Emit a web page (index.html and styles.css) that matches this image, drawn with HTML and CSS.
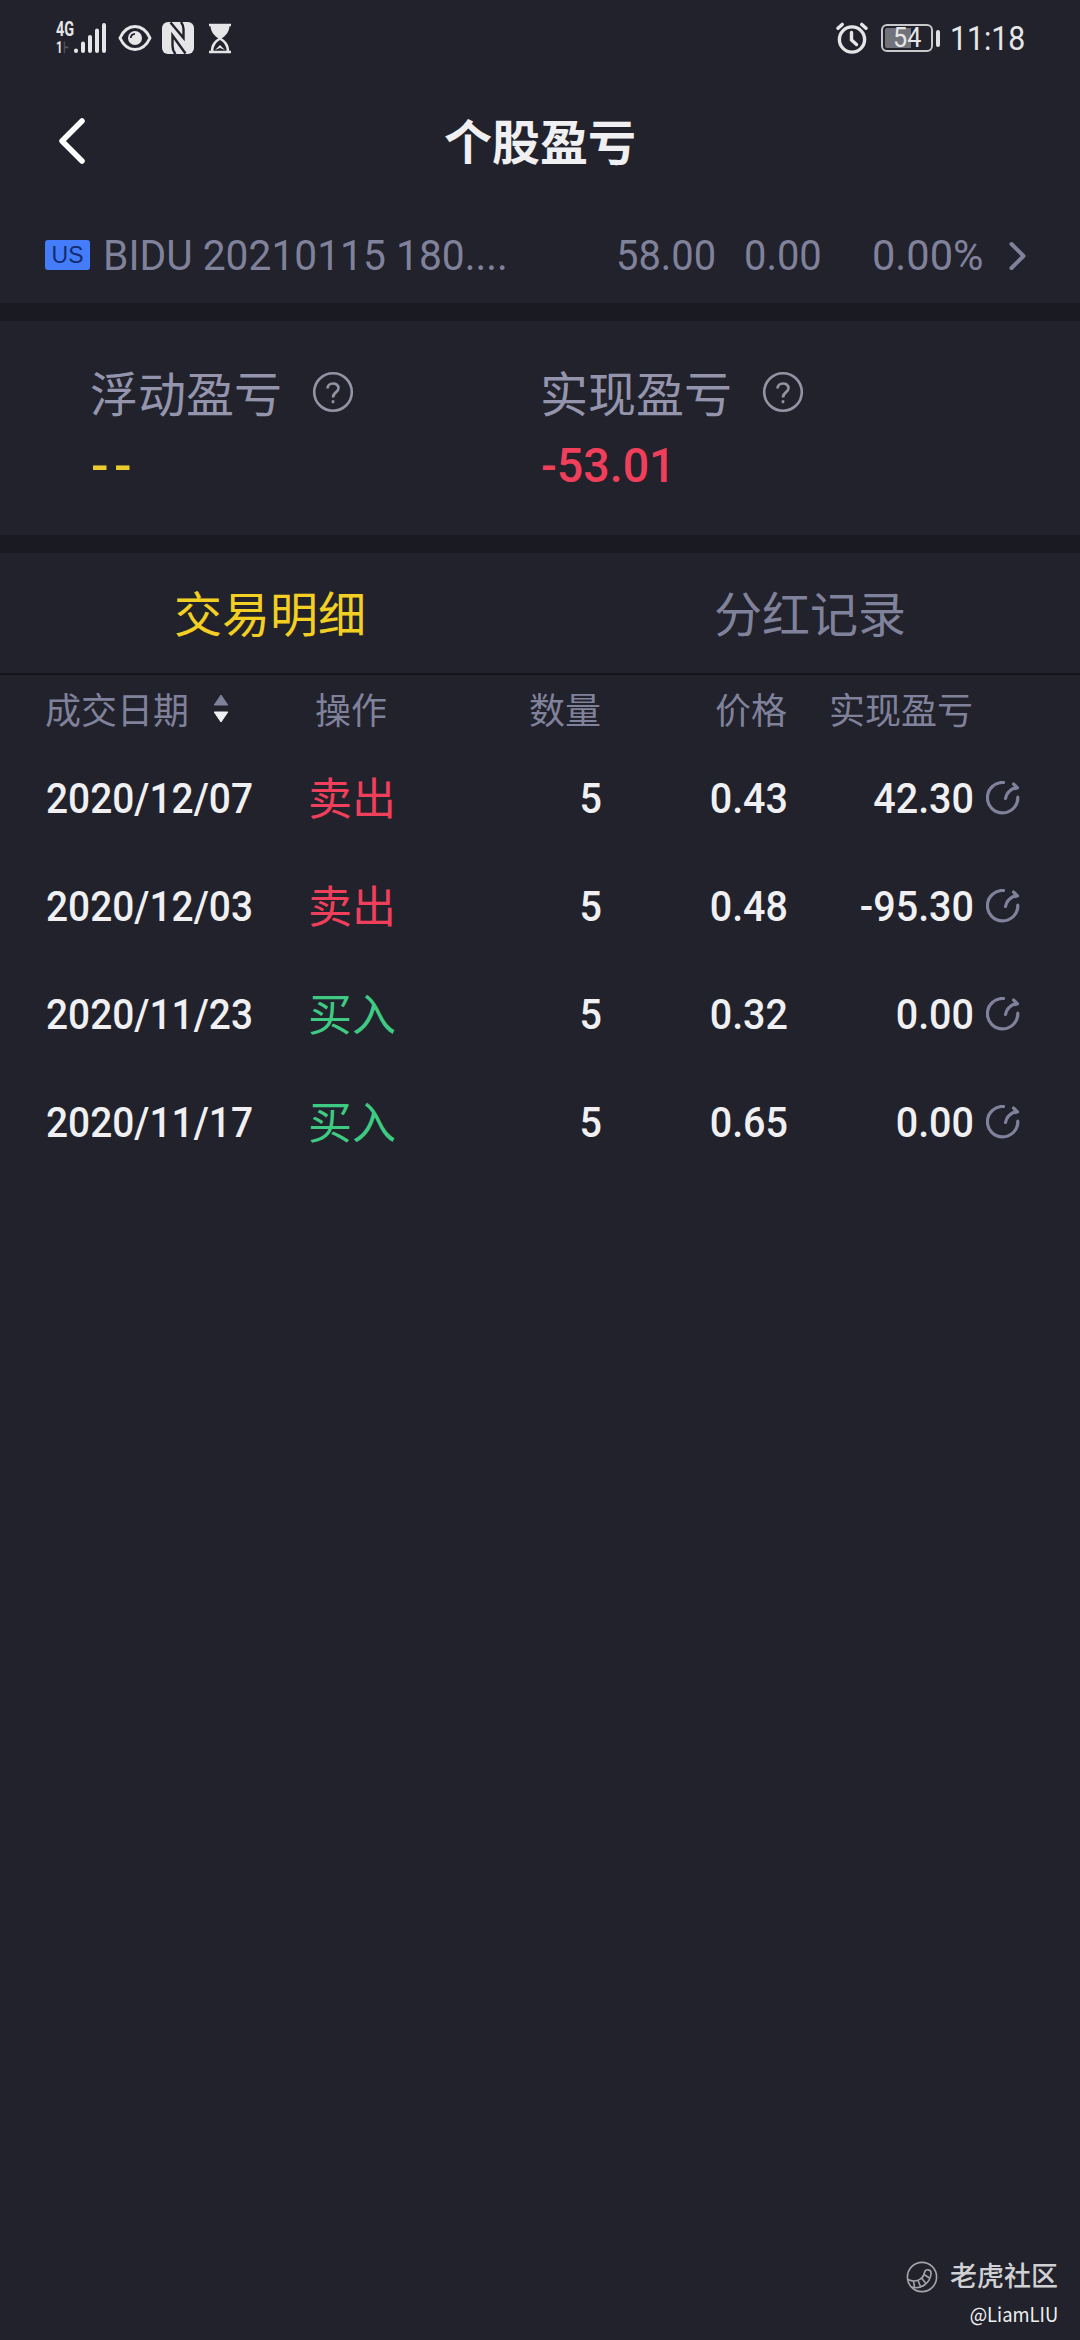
FILE: index.html
```html
<!DOCTYPE html>
<html lang="zh-CN">
<head>
    <meta charset="UTF-8">
    <meta name="viewport" content="width=device-width, initial-scale=1.0">
    <title>个股盈亏</title>
    <link rel="stylesheet" href="styles.css">
</head>
<body>
    <svg class="defs">
        <symbol id="share" viewBox="0 0 34 34">
            <path d="M17.5 1.5 A15.2 15.2 0 1 0 31.8 16.2" />
            <path d="M19.5 17.5 C20.5 12.5 24 8.5 29.5 6.5" />
            <path d="M27.5 3 L31.5 6.8 L29.5 7.5" />
        </symbol>
        <symbol id="help" viewBox="0 0 42 42">
            <circle cx="21" cy="21" r="18.8" />
            <path d="M15.5 17.5 C15.5 10.8 26.5 10.8 26.5 17.3 C26.5 21.2 21 21.2 21 26.4" />
            <path d="M21 29.2 V32.2" />
        </symbol>
    </svg>

    <div class="status-bar">
        <div class="status-left">
            <div class="network">
                <span>4G</span>
                <span>1<i>⊦</i></span>
            </div>
            <svg class="signal" width="34" height="32" viewBox="0 0 34 32">
                <path d="M3 28.5 V29 M10 21.5 V29 M17 15 V29 M24 8.5 V29 M31 3 V29" />
            </svg>
            <svg class="eye" width="34" height="28" viewBox="0 0 34 28">
                <path d="M2 14 C9 -1.3 25 -1.3 32 14 C25 29.3 9 29.3 2 14 Z" fill="none" stroke="#e6e6e8" stroke-width="3" />
                <circle cx="17" cy="14" r="7" fill="#e6e6e8" />
                <path d="M12.8 14 A4.4 4.4 0 0 1 17 9.8" fill="none" stroke="#21222b" stroke-width="1.8" />
            </svg>
            <svg class="nfc" width="32" height="32" viewBox="0 0 32 32">
                <rect width="32" height="32" rx="6" fill="#e6e6e8" />
                <path d="M8.5 0.5 L21.5 16 V7 C21.5 4 20.5 2 19 0" fill="none" stroke="#21222b" stroke-width="2.4" />
                <path d="M23.5 31.5 L10.5 13.5 V24 C10.5 27.5 11.5 30 13.5 32" fill="none" stroke="#21222b" stroke-width="2.4" />
            </svg>
            <svg class="hourglass" width="24" height="31" viewBox="0 0 24 31">
                <path d="M1 2 H23 M1 29 H23" stroke="#e6e6e8" stroke-width="2.4" />
                <path d="M2.5 2 H21.5 C21.5 9.5 17 13 13.5 15.5 H10.5 C7 13 2.5 9.5 2.5 2 Z" fill="#e6e6e8" />
                <path d="M4 29 C4 21 8 18 12 15.5 C16 18 20 21 20 29" fill="none" stroke="#e6e6e8" stroke-width="2.6" />
                <path d="M7 27 L12 22 L17 27 L12 25 Z" fill="#e6e6e8" />
            </svg>
        </div>
        <div class="status-right">
            <svg class="alarm" width="32" height="32" viewBox="0 0 32 32">
                <circle cx="16" cy="17.5" r="12.6" />
                <path d="M15.5 10.5 V18 L20.5 22.5" />
                <path d="M2 6.3 L6.2 2.4 M30 6.3 L25.8 2.4" />
            </svg>
            <div class="battery">
                <div class="battery-body"><span>54</span></div>
                <div class="battery-tip"></div>
            </div>
            <span class="clock">11:18</span>
        </div>
    </div>

    <div class="nav">
        <svg width="34" height="52" viewBox="0 0 34 52">
            <path d="M31 6 L11 26 L31 46" />
        </svg>
        <h1>个股盈亏</h1>
    </div>

    <div class="ticker">
        <span class="market">US</span>
        <span class="symbol">BIDU 20210115 180....</span>
        <span class="last">58.00</span>
        <span class="change">0.00</span>
        <span class="percent">0.00%</span>
        <svg width="22" height="34" viewBox="0 0 22 34">
            <path d="M4.5 5 L16.5 17 L4.5 29" />
        </svg>
    </div>

    <div class="summary">
        <div class="summary-item">
            <div class="summary-label"><span>浮动盈亏</span> <svg><use href="#help" /></svg></div>
            <div class="summary-value empty">--</div>
        </div>
        <div class="summary-item">
            <div class="summary-label"><span>实现盈亏</span> <svg><use href="#help" /></svg></div>
            <div class="summary-value loss">-53.01</div>
        </div>
    </div>

    <div class="tabs">
        <div class="tab active">交易明细</div>
        <div class="tab">分红记录</div>
    </div>

    <div class="row head">
        <span class="date">成交日期
            <svg width="16" height="29" viewBox="0 0 16 29">
                <path d="M8 1 L14.8 11 H1.2 Z" fill="#80819a" stroke="#80819a" />
                <path d="M8 28 L14.8 18 H1.2 Z" fill="#f0f0f2" stroke="#f0f0f2" />
            </svg>
        </span>
        <span class="op">操作</span>
        <span>数量</span>
        <span>价格</span>
        <span>实现盈亏</span>
    </div>
    <div class="row">
        <span class="date num">2020/12/07</span>
        <span class="op sell">卖出</span>
        <span class="num">5</span>
        <span class="num">0.43</span>
        <span class="num">42.30</span>
        <svg class="share"><use href="#share" /></svg>
    </div>
    <div class="row">
        <span class="date num">2020/12/03</span>
        <span class="op sell">卖出</span>
        <span class="num">5</span>
        <span class="num">0.48</span>
        <span class="num">-95.30</span>
        <svg class="share"><use href="#share" /></svg>
    </div>
    <div class="row">
        <span class="date num">2020/11/23</span>
        <span class="op buy">买入</span>
        <span class="num">5</span>
        <span class="num">0.32</span>
        <span class="num">0.00</span>
        <svg class="share"><use href="#share" /></svg>
    </div>
    <div class="row">
        <span class="date num">2020/11/17</span>
        <span class="op buy">买入</span>
        <span class="num">5</span>
        <span class="num">0.65</span>
        <span class="num">0.00</span>
        <svg class="share"><use href="#share" /></svg>
    </div>

    <div class="watermark">
        <div class="brand">
            <svg width="32" height="32" viewBox="0 0 32 32">
                <circle cx="16" cy="16" r="14.6" />
                <path d="M2 18.5 C9 22 17 19 18.5 11.5 C19.5 7.5 25.5 8 25 13 C24 22 15 29 5.5 26" />
                <path d="M7.5 20 L8.5 26 M12 19.5 L14.5 25.5 M15.5 17 L19.5 22 M18 13.5 L23.5 17" />
            </svg>
            <span>老虎社区</span>
        </div>
        <div class="author">@LiamLIU</div>
    </div>
</body>
</html>
```
FILE: styles.css
```css
* {
    box-sizing: border-box;
}
body {
    margin: 0;
    width: 1080px;
    height: 2340px;
    display: flex;
    flex-direction: column;
    overflow: hidden;
    background-color: #21222b;
    color: #f0f0f2;
    font-family: Roboto, "Noto Sans CJK SC", sans-serif;
}
svg {
    display: block;
    flex: none;
    fill: none;
}
.defs {
    display: none;
}

/* status bar */
.status-bar {
    height: 76px;
    display: flex;
    justify-content: space-between;
    padding: 0 56px;
    color: #e6e6e8;
}
.status-left, .status-right {
    display: flex;
    align-items: center;
}
.network {
    width: 17px;
    padding-bottom: 2px;
    font-size: 20px;
    font-weight: 700;
    line-height: 20px;
}
.network span {
    display: block;
    width: 26px;
    transform: scaleX(0.72);
    transform-origin: left;
}
.network span + span {
    font-size: 16px;
    line-height: 17px;
}
.network i {
    color: #55565f;
    font-style: normal;
}
.signal {
    stroke: #e6e6e8;
    stroke-width: 4;
    stroke-linecap: round;
}
.eye {
    margin-left: 11px;
}
.nfc {
    margin-left: 10px;
}
.hourglass {
    margin-left: 14px;
}
.alarm {
    stroke: #e6e6e8;
    stroke-width: 3.4;
    stroke-linecap: round;
    margin-right: 13px;
}
.battery {
    display: flex;
    align-items: center;
    gap: 3px;
    margin-right: 10px;
}
.battery-body {
    width: 52px;
    height: 28px;
    padding: 2px;
    border: 2px solid #c8c8cb;
    border-radius: 6px;
    background: linear-gradient(to right, #72737a 58%, transparent 58%) content-box;
    font-size: 27px;
    line-height: 21px;
    text-align: center;
}
.battery-body span {
    display: inline-block;
    margin: 0 -4px;
    transform: scaleX(0.93);
}
.battery-tip {
    width: 4px;
    height: 17px;
    border-radius: 2px;
    background-color: #e0e0e2;
}
.clock {
    width: 74px;
    font-size: 34px;
    transform: scaleX(0.89);
    transform-origin: left;
}

/* title */
.nav {
    height: 131px;
    display: flex;
    align-items: center;
    padding: 0 51px;
}
.nav svg {
    margin-top: -2px;
    stroke: #fff;
    stroke-width: 5.5;
    stroke-linecap: round;
    stroke-linejoin: round;
}
.nav h1 {
    flex: 1;
    margin: 0 34px 6px 0;
    font-size: 48px;
    font-weight: 700;
    text-align: center;
}

/* quote line */
.ticker {
    height: 96px;
    display: flex;
    align-items: center;
    padding: 1px 0 0 45px;
    color: #80819a;
    font-size: 42px;
}
.ticker span {
    white-space: nowrap;
    transform-origin: left;
}
.ticker svg {
    stroke: #80819a;
    stroke-width: 4;
    stroke-linecap: round;
    stroke-linejoin: round;
}
.ticker .market {
    width: 45px;
    height: 30px;
    margin: 0 13px 2px 0;
    border-radius: 3px;
    background-color: #457cfa;
    color: #122c70;
    font-family: "Liberation Sans", sans-serif;
    font-size: 23px;
    line-height: 31px;
    text-align: center;
}
.ticker .symbol {
    width: 513px;
    transform: scaleX(0.97);
}
.ticker .last {
    width: 128px;
    transform: scaleX(0.95);
}
.ticker .change {
    width: 128px;
    transform: scaleX(0.95);
}
.ticker .percent {
    width: 135px;
    transform: scaleX(0.99);
}

/* totals */
.summary {
    height: 250px;
    display: flex;
    border-top: 18px solid #1a1a23;
    border-bottom: 18px solid #1a1a23;
    padding: 38px 0 0 90px;
}
.summary-item {
    width: 450px;
}
.summary-label {
    height: 68px;
    display: flex;
    align-items: center;
    gap: 30px;
    color: #9495ad;
    font-size: 48px;
}
.summary-label span {
    margin-bottom: 5px;
}
.summary-label svg {
    width: 42px;
    height: 42px;
    margin-top: -3px;
    stroke: #9293a3;
    stroke-width: 2.6;
}
.summary-value {
    display: inline-block;
    height: 76px;
    margin-left: 1px;
    font-size: 49px;
    font-weight: 500;
    line-height: 78px;
    transform: scaleX(0.95);
    transform-origin: left;
}
.empty {
    color: #eccb2e;
    letter-spacing: 5px;
    transform: scaleX(1.06);
}
.loss {
    color: #f03f5b;
}

/* tabs */
.tabs {
    height: 122px;
    display: flex;
    border-bottom: 2px solid #14141c;
}
.tab {
    flex: 1;
    color: #80819a;
    font-size: 48px;
    line-height: 125px;
    text-align: center;
}
.tab.active {
    color: #f2cf22;
}

/* trades */
.row {
    height: 108px;
    display: grid;
    grid-template-columns: 264px 84px 208px 186px 186px auto;
    align-items: center;
    padding-left: 46px;
    text-align: right;
}
.row.head {
    height: 69px;
    padding: 0 0 3px 45px;
    color: #80819a;
    font-size: 36px;
}
.row .date {
    display: flex;
    align-items: center;
    gap: 24px;
    transform-origin: left;
}
.row .op {
    margin: 0 2px 4px -2px;
    font-size: 44px;
    text-align: center;
    white-space: nowrap;
}
.row.head .op {
    margin: 0;
    font-size: 36px;
}
.num {
    font-size: 42px;
    font-weight: 500;
    transform: scaleX(0.94);
    transform-origin: right;
}
.date.num {
    transform: scaleX(0.925);
}
.sell {
    color: #f03f5b;
}
.buy {
    color: #3fca83;
}
.share {
    width: 34px;
    height: 34px;
    margin-left: 12px;
    stroke: #80819a;
    stroke-width: 3.2;
    stroke-linecap: round;
    stroke-linejoin: round;
}

/* community mark */
.watermark {
    margin-top: auto;
    padding: 0 22px 9px 0;
    display: flex;
    flex-direction: column;
    align-items: flex-end;
}
.brand {
    display: flex;
    align-items: center;
    gap: 12px;
    color: #d0d0d4;
    font-size: 27px;
    font-weight: 500;
    line-height: 40px;
}
.brand svg {
    stroke: #a5a5ab;
    stroke-width: 1.6;
}
.author {
    font-family: "Noto Sans CJK SC", sans-serif;
    font-size: 20px;
    line-height: 34px;
    transform: scaleX(0.92);
    transform-origin: right;
}
```
